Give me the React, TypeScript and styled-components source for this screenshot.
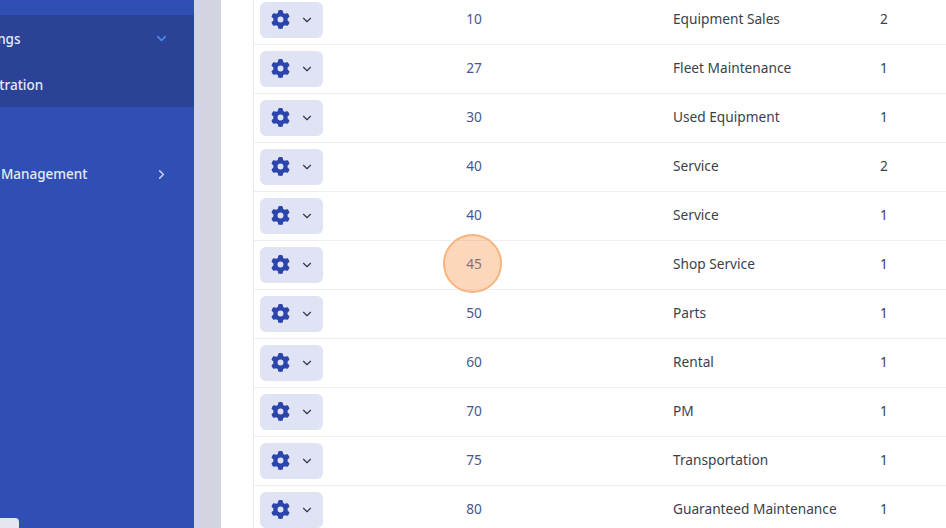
import styled, { createGlobalStyle } from 'styled-components';
import { FaGear } from 'react-icons/fa6';
import { FiChevronDown, FiChevronRight } from 'react-icons/fi';

const GlobalStyle = createGlobalStyle`
  html, body {
    margin: 0;
    height: 100%;
    overflow: hidden;
    background: #fff;
  }
  body {
    font-family: "Noto Sans", "Open Sans", sans-serif;
  }
`;

const Page = styled.div`
  display: flex;
  height: 528px;
  overflow: hidden;
`;

const Sidebar = styled.nav`
  position: relative;
  flex: 0 0 194px;
  display: flex;
  flex-direction: column;
  padding-top: 15px;
  background: #2f4fb5;
  box-sizing: border-box;
  overflow: hidden;
`;

const ActiveGroup = styled.div`
  display: flex;
  flex-direction: column;
  height: 92px;
  background: #2a4397;
`;

const NavItem = styled.div<{ $height: number }>`
  display: flex;
  align-items: center;
  justify-content: space-between;
  height: ${props => props.$height}px;
  padding-right: 25px;
  color: #e6eaf6;
  font-size: 13.5px;
  font-weight: 500;
  white-space: nowrap;
`;

const NavLabel = styled.span<{ $shift: number }>`
  margin-left: ${props => props.$shift}px;
`;

const Spacer = styled.div`
  height: 45px;
`;

const CornerTab = styled.div`
  position: absolute;
  left: 0;
  bottom: 0;
  width: 19px;
  height: 10px;
  background: #e4e5ee;
  border-top-right-radius: 4px;
`;

const Gutter = styled.div`
  flex: 0 0 27px;
  background: #d3d4e2;
`;

const Content = styled.main`
  flex: 1;
  padding-left: 32px;
  background: #fff;
`;

const Table = styled.div`
  border-left: 1px solid #e9ebf1;
`;

const Row = styled.div<{ $first?: boolean }>`
  display: grid;
  grid-template-columns: 69px 302px 255px 1fr;
  align-items: center;
  box-sizing: border-box;
  height: ${props => (props.$first ? 45 : 49)}px;
  padding: ${props => (props.$first ? 2 : 6)}px 0 6px;
  border-bottom: 1px solid #eceef3;
  font-size: 13.7px;
`;

const ActionCell = styled.div`
  padding-left: 6px;
`;

const ActionButton = styled.button`
  display: flex;
  align-items: center;
  width: 63px;
  height: 36px;
  padding: 0 0 1px 11px;
  border: 0;
  border-radius: 6px;
  background: #dfe3f4;
`;

const GearIcon = styled(FaGear)`
  width: 19px;
  height: 19px;
  color: #2c45ad;
`;

const CaretIcon = styled(FiChevronDown)`
  width: 14px;
  height: 14px;
  margin-left: 10px;
  color: #33384d;
`;

const CodeCell = styled.div`
  position: relative;
  padding-bottom: 4px;
  text-align: center;
  color: #47568f;
`;

const Highlight = styled.span`
  position: absolute;
  left: calc(50% - 31.5px);
  top: calc(50% - 31.5px);
  width: 59px;
  height: 59px;
  box-sizing: border-box;
  border: 2.5px solid #f9b47c;
  border-radius: 50%;
  background: rgba(251, 150, 80, 0.38);
`;

const NameCell = styled.div`
  padding: 0 0 4px 48px;
  color: #3a3f4d;
`;

const CountCell = styled.div`
  padding-bottom: 4px;
  color: #3a3f4d;
`;

const rows = [
  { code: 10, name: 'Equipment Sales', count: 2 },
  { code: 27, name: 'Fleet Maintenance', count: 1 },
  { code: 30, name: 'Used Equipment', count: 1 },
  { code: 40, name: 'Service', count: 2 },
  { code: 40, name: 'Service', count: 1 },
  { code: 45, name: 'Shop Service', count: 1 },
  { code: 50, name: 'Parts', count: 1 },
  { code: 60, name: 'Rental', count: 1 },
  { code: 70, name: 'PM', count: 1 },
  { code: 75, name: 'Transportation', count: 1 },
  { code: 80, name: 'Guaranteed Maintenance', count: 1 },
];

export default function App() {
  return (
    <Page>
      <GlobalStyle />
      <Sidebar>
        <ActiveGroup>
          <NavItem $height={47}>
            <NavLabel $shift={-32}>Settings</NavLabel>
            <FiChevronDown size={15} color="#4a8df0" strokeWidth={2.5} />
          </NavItem>
          <NavItem $height={45}>
            <NavLabel $shift={-53}>Administration</NavLabel>
          </NavItem>
        </ActiveGroup>
        <Spacer />
        <NavItem $height={44}>
          <NavLabel $shift={-36}>Parts Management</NavLabel>
          <FiChevronRight size={15} color="#c9d2ee" strokeWidth={2.5} />
        </NavItem>
        <CornerTab />
      </Sidebar>
      <Gutter />
      <Content>
        <Table>
          {rows.map((row, index) => (
            <Row key={index} $first={index === 0}>
              <ActionCell>
                <ActionButton>
                  <GearIcon />
                  <CaretIcon />
                </ActionButton>
              </ActionCell>
              <CodeCell>
                {row.code}
                {row.code === 45 && <Highlight />}
              </CodeCell>
              <NameCell>{row.name}</NameCell>
              <CountCell>{row.count}</CountCell>
            </Row>
          ))}
        </Table>
      </Content>
    </Page>
  );
}
